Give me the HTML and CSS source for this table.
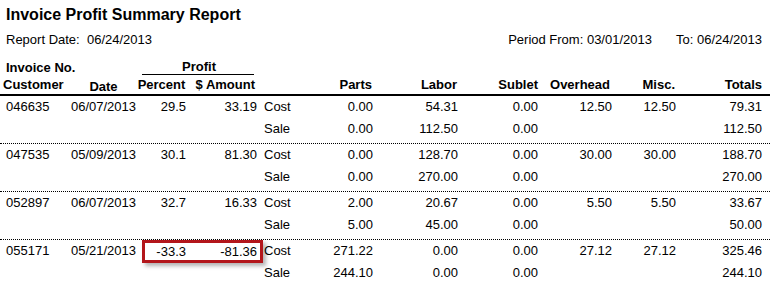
FILE: index.html
```html
<!DOCTYPE html>
<html>
<head>
<meta charset="utf-8">
<link rel="stylesheet" href="styles.css">
</head>
<body>
<div class="report">
  <h1 class="title">Invoice Profit Summary Report</h1>
  <div class="meta">
    <span class="report-date">Report Date:&nbsp;&nbsp;06/24/2013</span>
    <span class="period">Period From: 03/01/2013<span class="to">To: 06/24/2013</span></span>
  </div>
  <div class="grid head1">
    <div class="c1">Invoice No.</div>
    <div class="profit"><span class="profit-label">Profit</span></div>
  </div>
  <div class="grid head2">
    <div class="c1 h-cust">Customer</div>
    <div class="c2 h-date">Date</div>
    <div class="c3 h-center">Percent</div>
    <div class="c4 h-amt">$ Amount</div>
    <div class="c5"></div>
    <div class="num h-num1">Parts</div>
    <div class="num h-num1">Labor</div>
    <div class="num">Sublet</div>
    <div class="num h-num2">Overhead</div>
    <div class="num h-num1">Misc.</div>
    <div class="num">Totals</div>
  </div>
  <div class="rule"></div>

  <div class="group">
    <div class="grid row">
      <div class="c1">046635</div><div class="c2">06/07/2013</div><div class="num">29.5</div><div class="num">33.19</div><div class="c5">Cost</div>
      <div class="num">0.00</div><div class="num">54.31</div><div class="num">0.00</div><div class="num">12.50</div><div class="num">12.50</div><div class="num">79.31</div>
    </div>
    <div class="grid row">
      <div class="c1"></div><div class="c2"></div><div class="num"></div><div class="num"></div><div class="c5">Sale</div>
      <div class="num">0.00</div><div class="num">112.50</div><div class="num">0.00</div><div class="num"></div><div class="num"></div><div class="num">112.50</div>
    </div>
  </div>

  <div class="group">
    <div class="grid row">
      <div class="c1">047535</div><div class="c2">05/09/2013</div><div class="num">30.1</div><div class="num">81.30</div><div class="c5">Cost</div>
      <div class="num">0.00</div><div class="num">128.70</div><div class="num">0.00</div><div class="num">30.00</div><div class="num">30.00</div><div class="num">188.70</div>
    </div>
    <div class="grid row">
      <div class="c1"></div><div class="c2"></div><div class="num"></div><div class="num"></div><div class="c5">Sale</div>
      <div class="num">0.00</div><div class="num">270.00</div><div class="num">0.00</div><div class="num"></div><div class="num"></div><div class="num">270.00</div>
    </div>
  </div>

  <div class="group">
    <div class="grid row">
      <div class="c1">052897</div><div class="c2">06/07/2013</div><div class="num">32.7</div><div class="num">16.33</div><div class="c5">Cost</div>
      <div class="num">2.00</div><div class="num">20.67</div><div class="num">0.00</div><div class="num">5.50</div><div class="num">5.50</div><div class="num">33.67</div>
    </div>
    <div class="grid row">
      <div class="c1"></div><div class="c2"></div><div class="num"></div><div class="num"></div><div class="c5">Sale</div>
      <div class="num">5.00</div><div class="num">45.00</div><div class="num">0.00</div><div class="num"></div><div class="num"></div><div class="num">50.00</div>
    </div>
  </div>

  <div class="group last">
    <div class="grid row">
      <div class="c1">055171</div><div class="c2">05/21/2013</div>
      <div class="flag"><div class="num">-33.3</div><div class="num">-81.36</div></div>
      <div class="c5">Cost</div>
      <div class="num">271.22</div><div class="num">0.00</div><div class="num">0.00</div><div class="num">27.12</div><div class="num">27.12</div><div class="num">325.46</div>
    </div>
    <div class="grid row">
      <div class="c1"></div><div class="c2"></div><div class="num"></div><div class="num"></div><div class="c5">Sale</div>
      <div class="num">244.10</div><div class="num">0.00</div><div class="num">0.00</div><div class="num"></div><div class="num"></div><div class="num">244.10</div>
    </div>
  </div>
</div>
</body>
</html>
```

FILE: styles.css
```css
html, body {
  margin: 0;
  padding: 0;
  background: #fff;
}
body {
  font-family: "Liberation Sans", Arial, sans-serif;
  font-size: 13px;
  color: #000;
  width: 770px;
  height: 286px;
  overflow: hidden;
}
.report {
  width: 770px;
}
.title {
  margin: 5px 0 0 6px;
  font-size: 16px;
  line-height: 20px;
  font-weight: bold;
}
.meta {
  display: flex;
  justify-content: space-between;
  margin-top: 7px;
  padding: 0 8px 0 6px;
  line-height: 16px;
}
.to {
  margin-left: 24px;
}
.grid {
  display: grid;
  grid-template-columns: 64px 67px 49px 71px 43px 73px 85px 80px 74px 64px 86px;
  padding-left: 6px;
  padding-right: 8px;
}
.head1 {
  margin-top: 11px;
  font-weight: bold;
  line-height: 16px;
}
.head1 .c1 {
  grid-column: 1 / 3;
  padding-top: 1px;
}
.profit {
  grid-column: 3 / 5;
  text-align: center;
  padding: 0 3px 0 5px;
}
.profit-label {
  display: block;
  border-bottom: 1px solid #000;
  padding-left: 2px;
  line-height: 15px;
}
.head2 {
  font-weight: bold;
  line-height: 16px;
  margin-top: 1px;
}
.h-cust {
  margin-left: -3px;
}
.h-date {
  text-align: center;
  transform: translateY(2px);
}
.h-center {
  text-align: center;
}
.h-amt {
  text-align: right;
  padding-right: 2px;
}
.h-num1 {
  padding-right: 1px;
}
.h-num2 {
  padding-right: 2px;
}
.rule {
  margin-top: 1px;
  height: 2px;
  background: #000;
}
.group {
  padding: 0 0 3px;
  border-bottom: 1px dotted #000;
}
.group.last {
  border-bottom: none;
}
.row {
  line-height: 22px;
  height: 22px;
}
.c2 {
  text-align: center;
}
.c5 {
  padding-left: 7px;
}
.num {
  text-align: right;
}
.flag {
  grid-column: 3 / 5;
  display: grid;
  grid-template-columns: 41px 71px;
  padding-right: 3px;
  margin: 0 -6px -1px 5px;
  height: 23px;
  box-sizing: border-box;
  border: 3px solid #b3161b;
  box-shadow: 3px 3px 4px rgba(0, 0, 0, 0.3);
  line-height: 17px;
}
```
